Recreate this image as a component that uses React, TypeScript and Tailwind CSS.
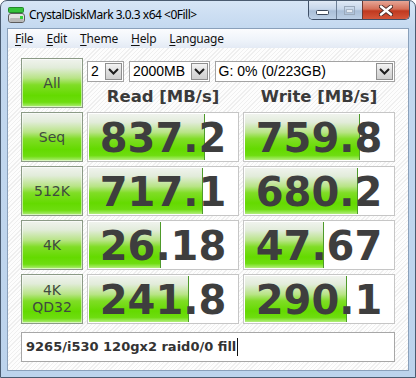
import React from "react";

type Row = { label: string[]; read: string; write: string };

const ROWS: Row[] = [
  { label: ["Seq"], read: "837.2", write: "759.8" },
  { label: ["512K"], read: "717.1", write: "680.2" },
  { label: ["4K"], read: "26.18", write: "47.67" },
  { label: ["4K", "QD32"], read: "241.8", write: "290.1" },
];

const MENU = ["File", "Edit", "Theme", "Help", "Language"];

// CrystalDiskMark meter is log scale over a 148px track
const meterWidth = (v: string) =>
  Math.round((148 * Math.log10(parseFloat(v) * 10)) / 5);

const GREEN =
  "bg-[linear-gradient(180deg,#f0f3ee_0%,#e2ecda_18%,#b8e486_40%,#80dd26_54%,#64da00_76%,#6edd10_90%,#b2ee7c_100%)]";

const AppIcon = () => (
  <svg width="17" height="16" viewBox="0 0 17 16">
    <rect x="0.5" y="0.5" width="15" height="5" rx="1" fill="#35c23a" stroke="#22892a" />
    <rect x="0.5" y="6.5" width="16" height="9" rx="2.5" fill="#e2e2e2" stroke="#5c5c5c" />
    <rect x="1.5" y="11" width="14" height="4" rx="1.5" fill="#b9b9b9" />
    <rect x="12" y="9" width="3" height="3" fill="#36d23a" />
  </svg>
);

const Chevron = () => (
  <svg width="11" height="7" viewBox="0 0 11 7">
    <path d="M1 1 L5.5 5.5 L10 1" fill="none" stroke="#1e1e1e" strokeWidth="2" />
  </svg>
);

const Select = ({ text, width }: { text: string; width: string }) => (
  <div className={`${width} h-[21px] flex bg-white border border-[#a3a3a3]`}>
    <span className="flex-1 pl-[3px] text-[14px] leading-[19px] text-black font-['Liberation_Sans',sans-serif] whitespace-nowrap overflow-hidden">
      {text}
    </span>
    <div className="w-[17px] m-px flex items-center justify-center border border-[#8f8f8f] bg-[linear-gradient(180deg,#f4f4f4,#dedede_50%,#cfcfcf)]">
      <Chevron />
    </div>
  </div>
);

const TestButton = ({ lines }: { lines: string[] }) => (
  <div
    className={`h-[50px] flex flex-col items-center justify-center border border-[#8b9a86] ${GREEN} shadow-[inset_0_0_0_1px_rgba(255,255,255,0.55)] text-[14px] leading-[17px] text-[#3f4a3f]`}
  >
    {lines.map((l) => (
      <span key={l}>{l}</span>
    ))}
  </div>
);

const Value = ({ v }: { v: string }) => (
  <div className="h-[50px] p-px bg-white border border-[#c6c6c6]">
    <div className="relative h-full flex items-center justify-center">
      <div
        className={`absolute left-0 top-0 bottom-0 ${GREEN} border-r border-[#4e9a2a]`}
        style={{ width: meterWidth(v) }}
      />
      <span className="relative pt-px text-[40px] leading-none font-bold text-[#3e3e3e]">{v}</span>
    </div>
  </div>
);

export default function App() {
  return (
    <div className="w-[416px] h-[378px] flex flex-col rounded-t-[7px] border border-[#4a5b70] bg-[linear-gradient(180deg,#d6e5f6_0px,#c3d8ef_28px,#bcd3ec_100%)] font-['DejaVu_Sans',sans-serif] overflow-hidden">
      {/* title bar */}
      <div className="h-[27px] flex items-start">
        <div className="flex items-center gap-[4px] pl-[7px] pt-[6px]">
          <AppIcon />
          <span className="text-[12px] leading-[16px] text-black font-['Noto_Sans',sans-serif] tracking-[-0.5px]">
            CrystalDiskMark 3.0.3 x64 &lt;0Fill&gt;
          </span>
        </div>
        <div className="ml-auto mr-[5px] h-[19px] flex border-x border-b border-[#3f5068] rounded-b-[5px] overflow-hidden">
          <div className="w-[27px] flex items-end justify-center pb-[4px] bg-[linear-gradient(180deg,#dfe9f5,#c6d6ea_45%,#aabfd8_55%,#bccfe5)]">
            <svg width="13" height="5" viewBox="0 0 13 5">
              <rect x="0.5" y="0.5" width="12" height="4" rx="1" fill="#fff" stroke="#3a4658" />
            </svg>
          </div>
          <div className="w-[26px] flex items-center justify-center border-l border-[#6d7f96] bg-[linear-gradient(180deg,#dfe9f5,#c6d6ea_45%,#aabfd8_55%,#bccfe5)]">
            <svg width="11" height="9" viewBox="0 0 11 9">
              <rect x="0.5" y="0.5" width="10" height="8" fill="none" stroke="#9aa9bb" />
              <rect x="2.5" y="3.5" width="6" height="3" fill="#e4ebf3" stroke="#a9b6c6" />
            </svg>
          </div>
          <div className="w-[47px] flex items-center justify-center border-l border-[#6e3a32] bg-[linear-gradient(180deg,#e6a696,#d46f58_45%,#c0391f_55%,#d4563a)]">
            <svg width="14" height="11" viewBox="0 0 14 11">
              <path d="M2 1.5 L12 9.5 M12 1.5 L2 9.5" stroke="#4a2a26" strokeWidth="4.2" strokeLinecap="round" />
              <path d="M2 1.5 L12 9.5 M12 1.5 L2 9.5" stroke="#ffffff" strokeWidth="2.4" strokeLinecap="round" />
            </svg>
          </div>
        </div>
      </div>

      {/* client area */}
      <div className="mx-[6px] flex-1 flex flex-col border border-[#8aa0ba]">
        {/* menu bar */}
        <div className="h-[19px] flex items-center gap-[13px] pl-[7px] bg-[linear-gradient(180deg,#fbfcfe,#eef3fa_60%,#e3eaf4)] text-[12px] text-[#111] font-['Noto_Sans',sans-serif] tracking-[-0.2px]">
          {MENU.map((m) => (
            <span key={m}>
              <span className="underline underline-offset-2">{m[0]}</span>
              {m.slice(1)}
            </span>
          ))}
        </div>

        {/* main panel */}
        <div className="flex-1 flex flex-col px-[13px] pt-[10px] bg-[repeating-linear-gradient(135deg,#fdfdfd_0px,#fdfdfd_2px,#efefef_2px,#efefef_3px)]">
          <div className="grid grid-cols-[62px_152px_152px] auto-rows-[50px] gap-x-[4px] gap-y-[4px]">
            <TestButton lines={["All"]} />
            <div className="col-span-2 flex flex-col">
              <div className="mt-[3px] flex gap-[5px]">
                <Select text="2" width="w-[37px]" />
                <Select text="2000MB" width="w-[81px]" />
                <Select text="G: 0% (0/223GB)" width="w-[181px]" />
              </div>
              <div className="mt-[5px] grid grid-cols-2 gap-x-[4px] text-[16.5px] leading-[20px] font-bold text-[#3a3a3a] text-center">
                <span>Read [MB/s]</span>
                <span>Write [MB/s]</span>
              </div>
            </div>

            {ROWS.map((r) => (
              <React.Fragment key={r.label.join("")}>
                <TestButton lines={r.label} />
                <Value v={r.read} />
                <Value v={r.write} />
              </React.Fragment>
            ))}
          </div>

          {/* comment */}
          <div className="mt-[8px] h-[30px] flex items-center pl-[4px] bg-white border border-[#a7a7a7] text-[13px] font-bold text-[#333]">
            <span>9265/i530 120gx2 raid0/0 fill</span>
            <span className="ml-px w-px h-[18px] bg-[#111]" />
          </div>
        </div>
      </div>

      {/* bottom frame */}
      <div className="h-[6px]" />
    </div>
  );
}
